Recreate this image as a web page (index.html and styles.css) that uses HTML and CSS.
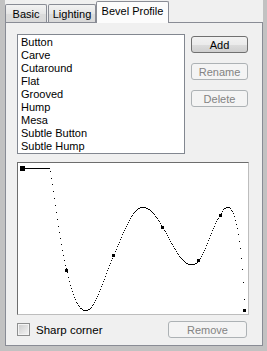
FILE: index.html
```html
<!DOCTYPE html>
<html lang="en">
  <head>
    <meta charset="UTF-8" />
    <title>Bevel Profile</title>
    <link rel="stylesheet" href="styles.css">
  </head>
  <body>
    <div class="window">
      <div class="tabs" role="tablist">
        <div class="tab tab-basic" role="tab">Basic</div>
        <div class="tab tab-lighting" role="tab">Lighting</div>
        <div class="tab tab-bevel active" role="tab" aria-selected="true">Bevel Profile</div>
      </div>

      <div class="page" role="tabpanel">
        <div class="top-row">
          <ul class="profile-list">
            <li>Button</li>
            <li>Carve</li>
            <li>Cutaround</li>
            <li>Flat</li>
            <li>Grooved</li>
            <li>Hump</li>
            <li>Mesa</li>
            <li>Subtle Button</li>
            <li>Subtle Hump</li>
          </ul>
          <div class="side-buttons">
            <button class="btn">Add</button>
            <button class="btn" disabled>Rename</button>
            <button class="btn" disabled>Delete</button>
          </div>
        </div>

        <div class="graph">
          <svg class="curve" width="230" height="151" viewBox="18 163 230 151" shape-rendering="crispEdges">
            <path id="profile-path" fill="none" stroke="none"
              d="M22,168 L49,168
                 C55,205 60,250 66,270
                 C71,292 76,310 85,310
                 C95,310 103,276 113,255
                 C122,234 131,207 142,207
                 C150,207 156,217 162,227
                 C172,244 180,264 190,264
                 C194,264 196,263 198,260
                 C206,249 212,224 220,214
                 C222,209 224,207 227,207
                 C237,207 242,262 244,310" />
            <g id="profile-dots" fill="#000"></g>
            <g class="handles" fill="#000">
              <rect x="20" y="166" width="5" height="5" />
              <rect x="65" y="269" width="3" height="3" />
              <rect x="112" y="254" width="3" height="3" />
              <rect x="161" y="226" width="3" height="3" />
              <rect x="197" y="259" width="3" height="3" />
              <rect x="219" y="214" width="3" height="3" />
              <rect x="243" y="309" width="3" height="3" />
            </g>
          </svg>
        </div>

        <div class="bottom-row">
          <label class="check">
            <span class="check-box"></span>
            Sharp corner
          </label>
          <button class="btn btn-remove" disabled>Remove</button>
        </div>
      </div>
    </div>

    <script src="script.js"></script>
  </body>
</html>
```

FILE: script.js
```js
document.addEventListener("DOMContentLoaded", () => {
  const path = document.getElementById("profile-path");
  const dots = document.getElementById("profile-dots");
  const total = path.getTotalLength();
  const seen = new Set();

  // one pixel per column, like the old plotter did
  for (let len = 0; len <= total; len += 0.2) {
    const pt = path.getPointAtLength(len);
    const col = Math.round(pt.x);
    if (seen.has(col)) continue;
    seen.add(col);
    const dot = document.createElementNS("http://www.w3.org/2000/svg", "rect");
    dot.setAttribute("x", col);
    dot.setAttribute("y", Math.round(pt.y));
    dot.setAttribute("width", 1);
    dot.setAttribute("height", 1);
    dots.appendChild(dot);
  }
});
```

FILE: styles.css
```css
* {
  margin: 0;
  padding: 0;
  box-sizing: border-box;
}

body {
  background-color: #c2c2c2;
  font-family: "Liberation Sans", Arial, sans-serif;
  font-size: 11px;
  color: #000;
}

.window {
  margin-left: 5px;
  width: 258px;
  height: 346px;
  background-color: #f0f0f0;
}

.tabs {
  display: flex;
  align-items: flex-end;
  height: 22px;
}

.tab {
  position: relative;
  height: 18px;
  padding-top: 3px;
  border: 1px solid #898c95;
  border-bottom: none;
  border-radius: 2px 2px 0 0;
  background: linear-gradient(#f3f3f3, #e6e6e6 50%, #dcdcdc 51%, #d9d9d9);
  font-size: 11px;
  text-align: center;
  white-space: nowrap;
}

.tab-basic {
  width: 42px;
}

.tab-lighting {
  width: 48px;
  margin-left: 1px;
}

.tab.active {
  height: 22px;
  margin-bottom: -1px;
  padding-top: 3px;
  background: #fcfcfc;
  z-index: 1;
}

.tab-bevel {
  width: 73px;
}

.page {
  height: 324px;
  padding: 11px 12px 0 11px;
  border: 1px solid #898c95;
}

.top-row {
  display: flex;
  gap: 6px;
}

.profile-list {
  list-style: none;
  width: 168px;
  height: 120px;
  padding: 1px 3px;
  border: 1px solid #828790;
  background-color: #fff;
}

.profile-list li {
  height: 13px;
  line-height: 13px;
}

.side-buttons {
  display: flex;
  flex-direction: column;
  gap: 10px;
  padding-top: 2px;
}

.btn {
  width: 57px;
  height: 17px;
  border: 1px solid #707070;
  border-radius: 3px;
  background: linear-gradient(#f2f2f2, #ebebeb 50%, #dddddd 51%, #cfcfcf);
  font-family: inherit;
  font-size: 11px;
  color: #000;
  line-height: 14px;
}

.btn:disabled {
  border-color: #adb2b5;
  background: #f4f4f4;
  color: #838383;
}

.graph {
  width: 232px;
  height: 153px;
  margin-top: 8px;
  border: 1px solid;
  border-color: #6d6d6d #bdbdbd #bdbdbd #6d6d6d;
  background-color: #fff;
}

.curve {
  display: block;
}

.bottom-row {
  display: flex;
  justify-content: space-between;
  align-items: center;
  width: 232px;
  margin-top: 6px;
  padding-right: 2px;
}

.check {
  display: flex;
  align-items: center;
  gap: 6px;
  font-size: 11.5px;
}

.check-box {
  width: 13px;
  height: 13px;
  border: 1px solid #8e8f8f;
  background: linear-gradient(135deg, #cbcbcb, #f6f6f6);
  box-shadow: inset 0 0 0 1px #f4f4f4;
}

.btn-remove {
  width: 79px;
}
```
